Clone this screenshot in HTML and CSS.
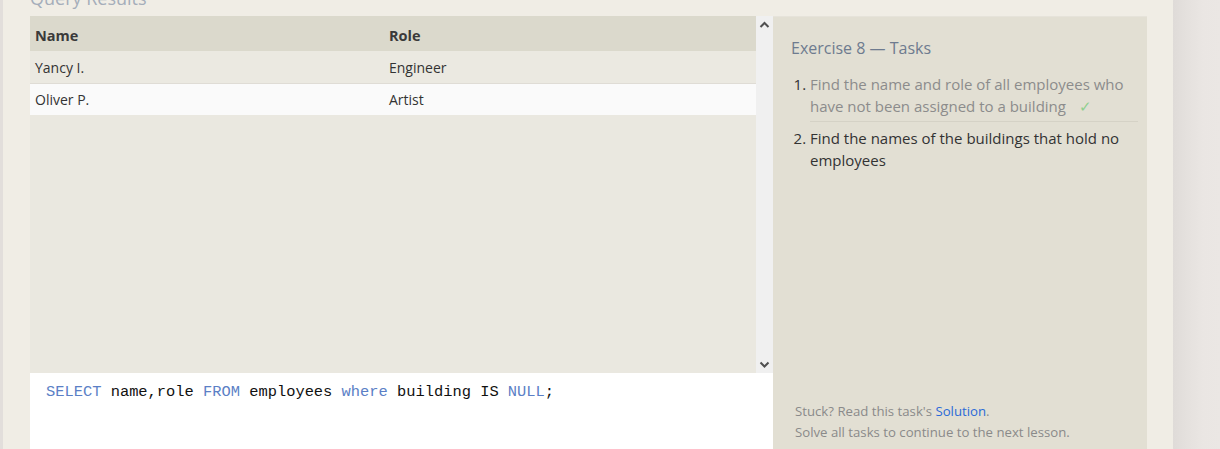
FILE: index.html
```html
<!DOCTYPE html>
<html lang="en">
<head>
<meta charset="utf-8">
<title>Exercise 8 — Tasks</title>
<link rel="stylesheet" href="styles.css">
</head>
<body>
<div class="page">
  <main class="main">
    <h2 class="section-title">Query Results</h2>
    <div class="workspace">
      <div class="query-col">
        <div class="results">
          <div class="table-wrap">
            <table class="results-table">
              <thead>
                <tr><th class="col-name">Name</th><th>Role</th></tr>
              </thead>
              <tbody>
                <tr class="odd"><td>Yancy I.</td><td>Engineer</td></tr>
                <tr class="even"><td>Oliver P.</td><td>Artist</td></tr>
              </tbody>
            </table>
          </div>
          <div class="scrollbar">
            <svg class="arrow" width="17" height="17" viewBox="0 0 17 17"><path d="M4.5 11 L8.5 7 L12.5 11" fill="none" stroke="#505050" stroke-width="2"/></svg>
            <svg class="arrow" width="17" height="17" viewBox="0 0 17 17"><path d="M4.5 6.5 L8.5 10.5 L12.5 6.5" fill="none" stroke="#505050" stroke-width="2"/></svg>
          </div>
        </div>
        <div class="editor">
          <code class="code"><span class="kw">SELECT</span> name,role <span class="kw">FROM</span> employees <span class="kw">where</span> building IS <span class="kw">NULL</span>;</code>
        </div>
      </div>
      <aside class="tasks">
        <h3 class="tasks-title">Exercise 8 — Tasks</h3>
        <ol class="task-list">
          <li class="task done">Find the name and role of all employees who have not been assigned to a building<span class="check">✓</span></li>
          <li class="task">Find the names of the buildings that hold no employees</li>
        </ol>
        <div class="tasks-footer">
          <p>Stuck? Read this task's <a class="link" href="#">Solution</a>.</p>
          <p>Solve all tasks to continue to the next lesson.</p>
        </div>
      </aside>
    </div>
  </main>
  <div class="side-strip"></div>
</div>
</body>
</html>
```

FILE: styles.css
```css
html, body {
  margin: 0;
  padding: 0;
  height: 100%;
  overflow: hidden;
}
body {
  background: #f0ede5;
  font-family: "Open Sans", "Noto Sans", sans-serif;
  color: #333;
}
.page {
  display: flex;
  height: 100%;
  border-left: 3px solid #e2dedb;
}
.main {
  flex: 1;
  padding-left: 27px;
  padding-right: 26px;
}
.section-title {
  margin: -14px 0 0 0;
  height: 30px;
  font-size: 18px;
  line-height: 24px;
  font-weight: 400;
  color: #a5adba;
}
.workspace {
  display: flex;
  align-items: stretch;
}
.query-col {
  width: 743px;
  display: flex;
  flex-direction: column;
}
.results {
  display: flex;
  height: 357px;
  background: #eae8e0;
}
.table-wrap {
  flex: 1;
}
.results-table {
  width: 100%;
  border-collapse: collapse;
  table-layout: fixed;
  font-size: 14px;
}
.results-table th {
  text-align: left;
  font-weight: 700;
  background: #dbd9cc;
  color: #3a3a3a;
  height: 35px;
  padding: 3px 5px 0 5px;
  box-sizing: border-box;
  font-size: 14.5px;
}
.results-table .col-name {
  width: 354px;
}
.results-table td {
  padding: 0 5px;
  color: #333;
}
.results-table tr.odd td {
  background: #ebe9e1;
  border-bottom: 1px solid #dfdcd5;
  height: 32px;
}
.results-table tr.even td {
  background: #fafafa;
  height: 31px;
}
.scrollbar {
  width: 17px;
  background: #f0f0f0;
  display: flex;
  flex-direction: column;
  justify-content: space-between;
}
.arrow {
  display: block;
}
.editor {
  background: #fff;
  height: 100px;
  padding: 6px 16px;
  box-sizing: border-box;
}
.code {
  font-family: "Liberation Mono", monospace;
  font-size: 15.4px;
  line-height: 20px;
  color: #111;
}
.kw {
  color: #5b7fc6;
}
.tasks {
  width: 374px;
  box-sizing: border-box;
  background: #e2dfd3;
  border-top: 1px solid #e6e3da;
  padding: 19px 9px 30px 18px;
  display: flex;
  flex-direction: column;
}
.tasks-title {
  margin: 0;
  font-size: 16px;
  line-height: 24px;
  font-weight: 400;
  color: #6e7b8f;
}
.task-list {
  margin: 13px 0 0 0;
  padding-left: 19px;
  font-size: 15px;
  line-height: 22px;
}
.task {
  padding: 0 0 5px 0;
  color: #333;
}
.task.done {
  color: #8c8c8c;
  border-bottom: 1px solid #d5d2c6;
  padding-bottom: 4px;
  margin-bottom: 5px;
}
.task::marker {
  color: #333;
}
.check {
  color: #8fcf8f;
  margin-left: 13px;
}
.tasks-footer {
  margin-top: auto;
  padding-left: 4px;
  font-size: 13.2px;
  line-height: 21px;
  color: #8a8a8a;
}
.tasks-footer p {
  margin: 0;
}
.link {
  color: #2a6ad8;
  text-decoration: none;
}
.side-strip {
  width: 47px;
  background: linear-gradient(to right, #dfdbd8 0px, #e4e0dd 12px, #eae6e3 30px, #ebe7e4 47px);
}
```
